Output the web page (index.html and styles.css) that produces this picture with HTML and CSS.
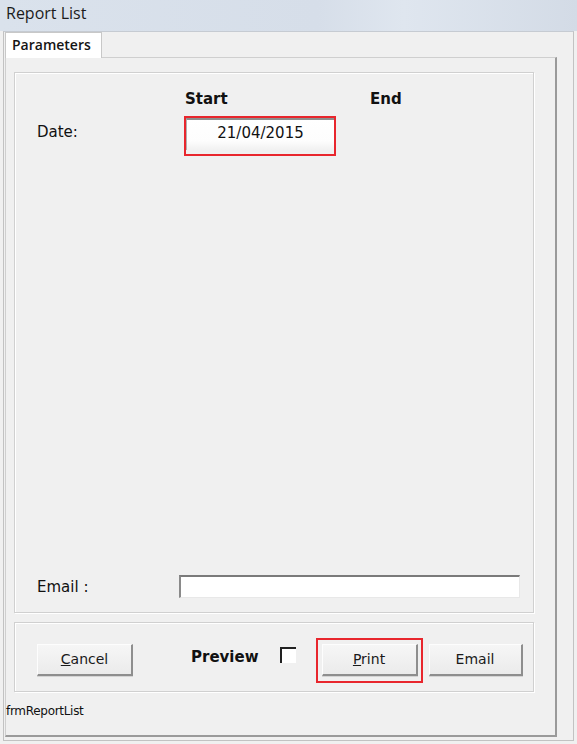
FILE: index.html
```html
<!DOCTYPE html>
<html>
<head>
<meta charset="utf-8">
<link rel="stylesheet" href="styles.css">
</head>
<body>
<div class="titlebar">Report List</div>
<div class="window">
  <div class="tabstrip">
    <div class="tab">Parameters</div>
  </div>
  <div class="tabpage">
    <div class="group params">
      <div class="grid">
        <div></div>
        <div class="hdr">Start</div>
        <div class="hdr">End</div>
        <div class="lbl date-lbl">Date:</div>
        <div class="mark date-mark"><div class="datebox">21/04/2015</div></div>
        <div></div>
      </div>
      <div class="email-row">
        <div class="lbl email-lbl">Email :</div>
        <div class="textbox"></div>
      </div>
    </div>
    <div class="group actions">
      <div class="btn cancel"><span class="u">C</span>ancel</div>
      <div class="preview">Preview</div>
      <div class="check"></div>
      <div class="mark print-mark"><div class="btn print"><span class="u">P</span>rint</div></div>
      <div class="btn email">Email</div>
    </div>
    <div class="formname">frmReportList</div>
  </div>
</div>
</body>
</html>
```
FILE: styles.css
```css
* { box-sizing: border-box; }
html, body {
  margin: 0;
  padding: 0;
  width: 577px;
  height: 744px;
  overflow: hidden;
  background: #f0f0f0;
  font-family: "DejaVu Sans", sans-serif;
  color: #111;
}
.titlebar {
  height: 31px;
  padding: 4px 0 0 6px;
  background: linear-gradient(to right, #dae2ec 0%, #d6dee9 55%, #dfe6ef 70%, #d3dbe6 100%);
  font-family: "Open Sans", sans-serif;
  font-size: 16px;
  line-height: 18px;
  color: #1b1b1b;
}
.window {
  margin-left: 3px;
  width: 571px;
  height: 710px;
  border: 1px solid #c2c2c2;
  border-top-color: #c6cbd2;
  padding-left: 1px;
  background: #f0f0f0;
}
.tabstrip {
  height: 25px;
  display: flex;
  align-items: flex-end;
}
.tab {
  width: 97px;
  height: 26px;
  margin-bottom: -1px;
  background: #fff;
  border: 1px solid #c8c8c8;
  border-bottom: none;
  padding: 3px 0 0 6px;
  font-family: "Open Sans", sans-serif;
  font-weight: 600;
  font-size: 14px;
  line-height: 18px;
  color: #151515;
  position: relative;
  z-index: 1;
}
.tabpage {
  width: 552px;
  height: 680px;
  border: 1px solid #cfcfcf;
  border-right: 2px solid #9a9a9a;
  border-bottom: 2px solid #9a9a9a;
  padding: 14px 0 0 8px;
}
.group {
  width: 520px;
  border: 1px solid #d0d0d0;
  box-shadow: inset 1px 1px 0 #fff, 1px 1px 0 #fff;
}
.params {
  height: 541px;
  display: flex;
  flex-direction: column;
  padding: 17px 0 14px 22px;
}
.grid {
  display: grid;
  grid-template-columns: 148px 185px 1fr;
  row-gap: 8px;
  align-items: start;
}
.hdr {
  font-weight: bold;
  font-size: 15px;
  line-height: 18px;
}
.lbl {
  font-size: 15px;
  line-height: 18px;
}
.date-lbl { margin-top: 7px; }
.mark {
  border: 2px solid #e8262d;
}
.date-mark {
  width: 152px;
  height: 40px;
  margin-left: -1px;
  padding: 0 0 4px 0;
}
.datebox {
  height: 32px;
  border-top: 2px solid #8d8d8d;
  border-left: 1px solid #b0b0b0;
  background: linear-gradient(#ffffff 0%, #fdfdfd 70%, #f1f1f1 100%);
  text-align: center;
  font-size: 15px;
  line-height: 20px;
  padding-top: 3px;
}
.email-row {
  margin-top: auto;
  display: flex;
  align-items: center;
}
.email-lbl { width: 142px; }
.textbox {
  width: 341px;
  height: 23px;
  background: #fff;
  border-top: 2px solid #7a7a7a;
  border-left: 2px solid #8a8a8a;
  border-right: 1px solid #e8e8e8;
  border-bottom: 1px solid #e8e8e8;
}
.actions {
  height: 70px;
  margin-top: 9px;
  display: flex;
  align-items: flex-start;
  padding-left: 22px;
}
.btn {
  height: 32px;
  background: linear-gradient(#f6f6f6, #ebebeb);
  border-top: 1px solid #fdfdfd;
  border-left: 1px solid #fdfdfd;
  border-right: 2px solid #8e8e8e;
  border-bottom: 2px solid #8e8e8e;
  box-shadow: 0 1px 0 #d4d4d4;
  text-align: center;
  font-size: 14px;
  line-height: 28px;
  color: #1a1a1a;
}
.u { text-decoration: underline; }
.cancel { width: 96px; margin-top: 21px; }
.preview {
  margin: 25px 0 0 58px;
  font-weight: bold;
  font-size: 15px;
  line-height: 18px;
}
.check {
  width: 16px;
  height: 16px;
  margin: 24px 0 0 21px;
  background: #fff;
  border-top: 2px solid #222;
  border-left: 2px solid #222;
}
.print-mark {
  margin: 15px 0 0 20px;
  padding: 4px 3px 5px 4px;
}
.print { width: 96px; }
.email { width: 94px; margin: 21px 0 0 6px; }
.formname {
  margin: 12px 0 0 -8px;
  font-size: 12px;
  line-height: 14px;
  letter-spacing: -0.3px;
  color: #111;
}
```
